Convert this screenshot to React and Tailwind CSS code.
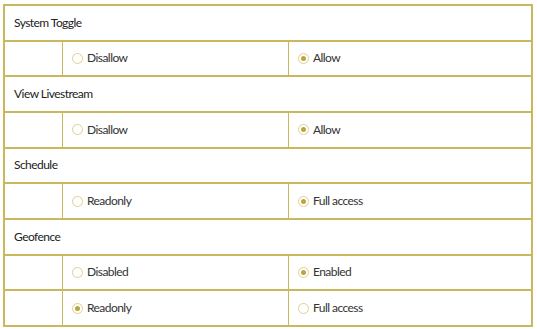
import React from "react";

const sections = [
  {
    title: "System Toggle",
    rows: [[{ label: "Disallow" }, { label: "Allow", checked: true }]],
  },
  {
    title: "View Livestream",
    rows: [[{ label: "Disallow" }, { label: "Allow", checked: true }]],
  },
  {
    title: "Schedule",
    rows: [[{ label: "Readonly" }, { label: "Full access", checked: true }]],
  },
  {
    title: "Geofence",
    rows: [
      [{ label: "Disabled" }, { label: "Enabled", checked: true }],
      [{ label: "Readonly", checked: true }, { label: "Full access" }],
    ],
  },
];

const Radio = ({ label, checked }) => (
  <label className="flex items-center gap-[4px] pl-[9px] text-[12px] tracking-[-0.55px] text-[#333333]">
    <span className="flex h-[11px] w-[11px] items-center justify-center rounded-full border border-[#e0cf92] bg-white">
      {checked && <span className="h-[5px] w-[5px] rounded-full bg-[#b9a73c]" />}
    </span>
    {label}
  </label>
);

export default function App() {
  return (
    <div
      className="min-h-[329px] bg-white pt-[4px] pl-[3px]"
      style={{ fontFamily: "Lato, 'Open Sans', sans-serif" }}
    >
      <div className="w-[530px] border-2 border-[#c9b85e]">
        {sections.map((section, i) => (
          <div key={i}>
            <div className="flex h-[35.67px] items-center border-b-2 border-[#c9b85e] px-[9px] text-[12px] tracking-[-0.55px] text-[#222222]">
              {section.title}
            </div>
            {section.rows.map((row, j) => {
              const last = i === sections.length - 1 && j === section.rows.length - 1;
              return (
                <div
                  key={j}
                  className={`flex ${last ? "h-[33.67px]" : "h-[35.67px] border-b-2"} border-[#c9b85e]`}
                >
                  <div className="w-[58px] border-r border-[#c9b85e]" />
                  <div className="flex w-[226px] items-center border-r border-[#c9b85e]">
                    <Radio {...row[0]} />
                  </div>
                  <div className="flex flex-1 items-center">
                    <Radio {...row[1]} />
                  </div>
                </div>
              );
            })}
          </div>
        ))}
      </div>
    </div>
  );
}
